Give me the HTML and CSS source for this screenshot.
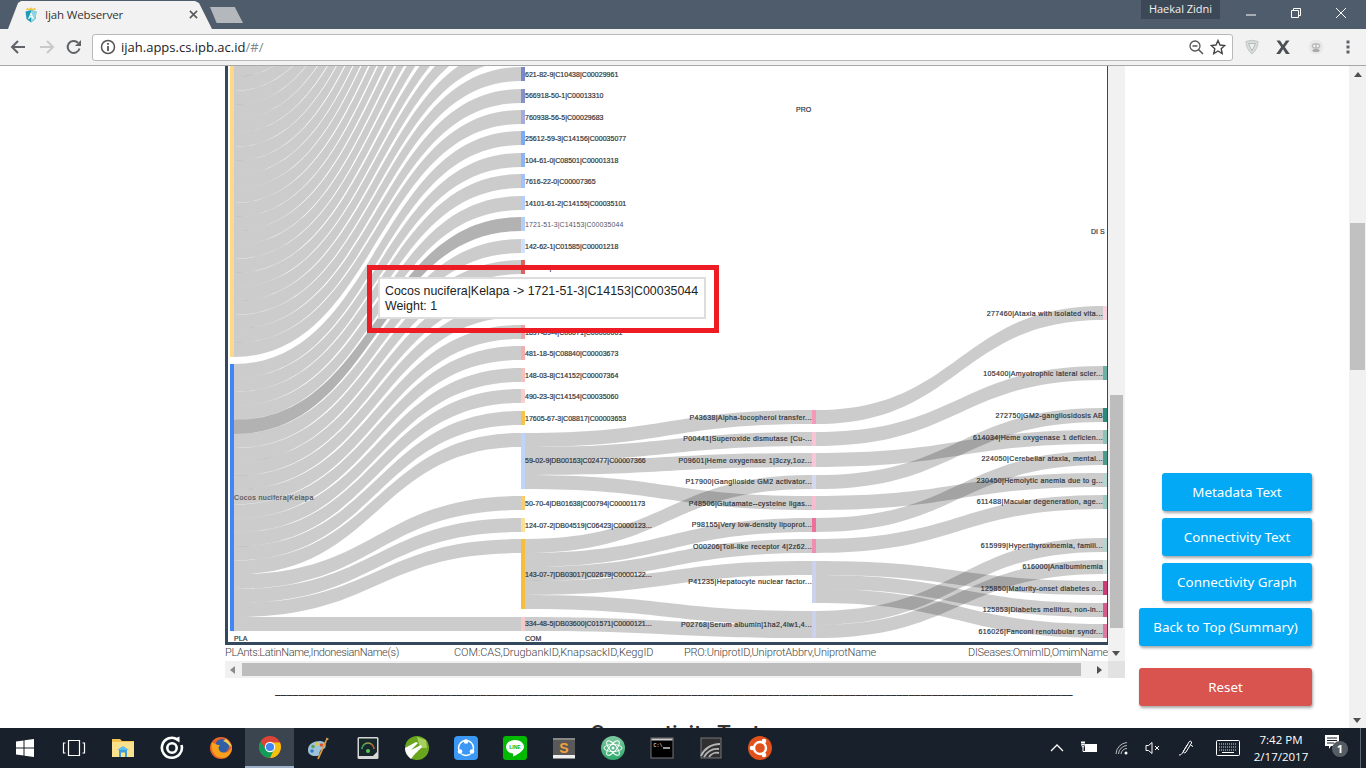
FILE: index.html
```html
<!DOCTYPE html>
<html lang="en">
<head>
<meta charset="utf-8">
<title>Ijah Webserver</title>
<link rel="stylesheet" href="styles.css">
</head>
<body>
<header class="tabstrip">
  <div class="tab">
    <svg class="favicon" viewBox="0 0 12 16"><path fill="#f5c542" d="M1 3 2 .5 4 2 6 .2 8 2 10 .5 11 3z"/><path fill="#1e9cb4" d="M6 3 11.5 4.5 10.5 12 6 15.5 1.500 12 .5 4.500z"/><path fill="#8fd3e0" d="M6 3 11.5 4.500 10.500 12 6 15.500z"/><path fill="#fff" d="M6 5 9 12H7.700L7.100 10.400H4.900L4.300 12H3zM5.300 9.300H6.700L6 7.500z"/></svg>
    <span class="tab-title">Ijah Webserver</span>
    <svg class="tab-close" viewBox="0 0 10 10"><path d="M1 1 9 9M9 1 1 9" stroke="#5a5a5a" stroke-width="1.800" fill="none"/></svg>
  </div>
  <div class="newtab"></div>
  <div class="profile">Haekal Zidni</div>
  <div class="winbtn"><svg viewBox="0 0 12 12"><path d="M1 8H11" stroke="#fff" fill="none"/></svg></div>
  <div class="winbtn"><svg viewBox="0 0 12 12"><path d="M1.500 3.500H8.500V10.500H1.500zM3.500 3.500V1.500H10.500V8.500H8.500" stroke="#fff" fill="none"/></svg></div>
  <div class="winbtn"><svg viewBox="0 0 12 12"><path d="M1 1 11 11M11 1 1 11" stroke="#fff" fill="none"/></svg></div>
</header>

<nav class="toolbar">
  <svg class="tool" viewBox="0 0 16 16"><path d="M15 8H2.500M8 2 2 8l6 6" stroke="#5f6368" stroke-width="2" fill="none"/></svg>
  <svg class="tool" viewBox="0 0 16 16"><path d="M1 8H13.500M8 2l6 6-6 6" stroke="#c9c9c9" stroke-width="2" fill="none"/></svg>
  <svg class="tool" viewBox="0 0 16 16"><path d="M13.500 9.500A6 6 0 1 1 12 3.700" stroke="#5f6368" stroke-width="2" fill="none"/><path fill="#5f6368" d="M15 1V7H9z"/></svg>
  <span></span>
  <div class="omnibox">
    <svg class="omni-icon" viewBox="0 0 16 16"><circle cx="8" cy="8" r="6.500" stroke="#555" stroke-width="1.500" fill="none"/><path d="M8 7V12M8 4V5.800" stroke="#555" stroke-width="1.800"/></svg>
    <span class="url">ijah.apps.cs.ipb.ac.id<span class="url-path">/#/</span></span>
    <svg class="omni-icon omni-zoom" viewBox="0 0 16 16"><circle cx="7" cy="7" r="5" stroke="#555" stroke-width="1.300" fill="none"/><path d="M4.500 7H9.500M10.500 10.500 15 15" stroke="#555" stroke-width="1.500"/></svg>
    <svg class="omni-icon" viewBox="0 0 16 16"><path d="M8 1.500 10 6 14.800 6.500 11.200 9.700 12.200 14.500 8 12 3.800 14.500 4.800 9.700 1.200 6.500 6 6z" stroke="#444" stroke-width="1.400" fill="none"/></svg>
  </div>
  <svg class="tool" viewBox="0 0 16 16"><path d="M2 2.500Q8 0 14 2.500 14 10 8 15 2 10 2 2.500z" fill="#d8dcda" stroke="#c0c4c2"/><path d="M4.500 4.500H11.500L8 12z" fill="#eef0ef" stroke="#b5bab7"/></svg>
  <svg class="tool" viewBox="0 0 16 16"><path d="M1.500 1.500H5L8 6 11 1.500H14.500L9.800 8 14.800 15H11L8 10.300 5 15H1.200L6.200 8z" fill="#4a4f54"/></svg>
  <svg class="tool" viewBox="0 0 16 16"><circle cx="8" cy="8" r="7.500" fill="#e9e9e9"/><ellipse cx="8" cy="7" rx="4.500" ry="3" fill="#bfbfbf"/><path d="M4 11C6 9.500 10 9.500 12 11L10.500 13H5.500z" fill="#aaa"/><circle cx="6.300" cy="7" r="1" fill="#fff"/><circle cx="9.700" cy="7" r="1" fill="#fff"/></svg>
  <svg class="tool tool-dots" viewBox="0 0 4 16"><path fill="#5f6368" d="M.5 1.500h3v3h-3zM.5 6.500h3v3h-3zM.5 11.500h3v3h-3z"/></svg>
</nav>

<div class="viewport">
  <main class="page">
    <section class="chartcol">
      <div class="scroller">
        <div class="scroll-main">
          <div class="plot">
            <svg class="sankey" viewBox="228 66 879 576">
              <g class="links">
                <path d="M234 63C377.500 63 377.500 -318 521 -318V-304C377.500 -304 377.500 77 234 77Z"/>
                <path d="M234 77C377.500 77 377.500 -297 521 -297V-283C377.500 -283 377.500 91 234 91Z"/>
                <path d="M234 91C377.500 91 377.500 -275 521 -275V-261C377.500 -261 377.500 105 234 105Z"/>
                <path d="M234 105C377.500 105 377.500 -254 521 -254V-240C377.500 -240 377.500 119 234 119Z"/>
                <path d="M234 119C377.500 119 377.500 -233 521 -233V-219C377.500 -219 377.500 133 234 133Z"/>
                <path d="M234 133C377.500 133 377.500 -211 521 -211V-197C377.500 -197 377.500 147 234 147Z"/>
                <path d="M234 147C377.500 147 377.500 -190 521 -190V-176C377.500 -176 377.500 161 234 161Z"/>
                <path d="M234 161C377.500 161 377.500 -168 521 -168V-154C377.500 -154 377.500 175 234 175Z"/>
                <path d="M234 175C377.500 175 377.500 -147 521 -147V-133C377.500 -133 377.500 189 234 189Z"/>
                <path d="M234 189C377.500 189 377.500 -126 521 -126V-112C377.500 -112 377.500 203 234 203Z"/>
                <path d="M234 203C377.500 203 377.500 -104 521 -104V-90C377.500 -90 377.500 217 234 217Z"/>
                <path d="M234 217C377.500 217 377.500 -83 521 -83V-69C377.500 -69 377.500 231 234 231Z"/>
                <path d="M234 231C377.500 231 377.500 -61 521 -61V-47C377.500 -47 377.500 245 234 245Z"/>
                <path d="M234 245C377.500 245 377.500 -40 521 -40V-26C377.500 -26 377.500 259 234 259Z"/>
                <path d="M234 259C377.500 259 377.500 -19 521 -19V-5C377.500 -5 377.500 273 234 273Z"/>
                <path d="M234 273C377.500 273 377.500 3 521 3V17C377.500 17 377.500 287 234 287Z"/>
                <path d="M234 287C377.500 287 377.500 24 521 24V38C377.500 38 377.500 301 234 301Z"/>
                <path d="M234 301C377.500 301 377.500 46 521 46V60C377.500 60 377.500 315 234 315Z"/>
                <path d="M234 315C377.500 315 377.500 67 521 67V81C377.500 81 377.500 329 234 329Z"/>
                <path d="M234 329C377.500 329 377.500 89 521 89V103C377.500 103 377.500 343 234 343Z"/>
                <path d="M234 343C377.500 343 377.500 110 521 110V124C377.500 124 377.500 357 234 357Z"/>

                <path d="M234 364C377.500 364 377.500 131 521 131V145C377.500 145 377.500 378 234 378Z"/>
                <path d="M234 378C377.500 378 377.500 153 521 153V167C377.500 167 377.500 392 234 392Z"/>
                <path d="M234 392C377.500 392 377.500 174 521 174V188C377.500 188 377.500 406 234 406Z"/>
                <path d="M234 406C377.500 406 377.500 196 521 196V210C377.500 210 377.500 420 234 420Z"/>
                <path class="hl" d="M234 420C377.500 420 377.500 217 521 217V231C377.500 231 377.500 434 234 434Z"/>
                <path d="M234 434C377.500 434 377.500 239 521 239V253C377.500 253 377.500 448 234 448Z"/>
                <path d="M234 448C377.500 448 377.500 260 521 260V274C377.500 274 377.500 462 234 462Z"/>
                <path d="M234 462C377.500 462 377.500 282 521 282V296C377.500 296 377.500 476 234 476Z"/>
                <path d="M234 476C377.500 476 377.500 303 521 303V317C377.500 317 377.500 490 234 490Z"/>
                <path d="M234 490C377.500 490 377.500 325 521 325V339C377.500 339 377.500 504.500 234 504.500Z"/>
                <path d="M234 504.500C377.500 504.500 377.500 346 521 346V360C377.500 360 377.500 518.500 234 518.500Z"/>
                <path d="M234 518.500C377.500 518.500 377.500 368 521 368V382C377.500 382 377.500 532.500 234 532.500Z"/>
                <path d="M234 532.500C377.500 532.500 377.500 389 521 389V403C377.500 403 377.500 546.500 234 546.500Z"/>
                <path d="M234 546.500C377.500 546.500 377.500 411 521 411V425C377.500 425 377.500 560.500 234 560.500Z"/>
                <path d="M234 560.500C377.500 560.500 377.500 433 521 433V447C377.500 447 377.500 574.500 234 574.500Z"/>
                <path d="M234 574.500C377.500 574.500 377.500 496 521 496V510C377.500 510 377.500 589 234 589Z"/>
                <path d="M234 589C377.500 589 377.500 518 521 518V532C377.500 532 377.500 603 234 603Z"/>
                <path d="M234 603C377.500 603 377.500 539 521 539V553C377.500 553 377.500 617 234 617Z"/>
                <path d="M234 617C377.500 617 377.500 617 521 617V631C377.500 631 377.500 631 234 631Z"/>

                <path d="M525 433C668.500 433 668.500 410 812 410V424C668.500 424 668.500 447 525 447Z"/>
                <path d="M525 447C668.500 447 668.500 432 812 432V446C668.500 446 668.500 461 525 461Z"/>
                <path d="M525 461C668.500 461 668.500 453 812 453V467C668.500 467 668.500 475 525 475Z"/>
                <path d="M525 475C668.500 475 668.500 496 812 496V510C668.500 510 668.500 489 525 489Z"/>
                <path d="M525 539C668.500 539 668.500 475 812 475V489C668.500 489 668.500 553 525 553Z"/>
                <path d="M525 553C668.500 553 668.500 518 812 518V532C668.500 532 668.500 567 525 567Z"/>
                <path d="M525 567C668.500 567 668.500 539 812 539V553C668.500 553 668.500 581 525 581Z"/>
                <path d="M525 581C668.500 581 668.500 561 812 561V575C668.500 575 668.500 595 525 595Z"/>
                <path d="M525 595C668.500 595 668.500 611 812 611V625C668.500 625 668.500 609 525 609Z"/>
                <path d="M525 617C668.500 617 668.500 625 812 625V638C668.500 638 668.500 631 525 631Z"/>

                <path d="M816 410C959.500 410 959.500 306 1103 306V320C959.500 320 959.500 424 816 424Z"/>
                <path d="M816 432C959.500 432 959.500 366 1103 366V380C959.500 380 959.500 446 816 446Z"/>
                <path d="M816 453C959.500 453 959.500 430 1103 430V444C959.500 444 959.500 467 816 467Z"/>
                <path d="M816 475C959.500 475 959.500 408 1103 408V422C959.500 422 959.500 489 816 489Z"/>
                <path d="M816 496C959.500 496 959.500 473 1103 473V487C959.500 487 959.500 510 816 510Z"/>
                <path d="M816 518C959.500 518 959.500 451 1103 451V465C959.500 465 959.500 532 816 532Z"/>
                <path d="M816 539C959.500 539 959.500 495 1103 495V509C959.500 509 959.500 553 816 553Z"/>
                <path d="M816 561C959.500 561 959.500 581 1103 581V595C959.500 595 959.500 575 816 575Z"/>
                <path d="M816 575C959.500 575 959.500 603 1103 603V617C959.500 617 959.500 589 816 589Z"/>
                <path d="M816 589C959.500 589 959.500 624 1103 624V638C959.500 638 959.500 603 816 603Z"/>
                <path d="M816 611C959.500 611 959.500 538 1103 538V552C959.500 552 959.500 625 816 625Z"/>
                <path d="M816 625C959.500 625 959.500 560 1103 560V574C959.500 574 959.500 638 816 638Z"/>
              </g>

              <rect x="230" y="60" width="4" height="297" fill="#fdd98a"/>
              <rect x="230" y="364" width="4" height="267" fill="#4285f4"/>

              <rect x="521" y="67" width="4" height="14" fill="#7986cb"/>
              <rect x="521" y="89" width="4" height="14" fill="#8590cf"/>
              <rect x="521" y="110" width="4" height="14" fill="#a3acdc"/>
              <rect x="521" y="131" width="4" height="14" fill="#7baaf7"/>
              <rect x="521" y="153" width="4" height="14" fill="#8ab4f8"/>
              <rect x="521" y="174" width="4" height="14" fill="#a1c2fa"/>
              <rect x="521" y="196" width="4" height="14" fill="#b3cefb"/>
              <rect x="521" y="217" width="4" height="14" fill="#b3cefb"/>
              <rect x="521" y="239" width="4" height="14" fill="#d0e1fd"/>
              <rect x="521" y="260" width="4" height="14" fill="#dc6460"/>
              <rect x="521" y="282" width="4" height="14" fill="#e57373"/>
              <rect x="521" y="303" width="4" height="14" fill="#e98a86"/>
              <rect x="521" y="325" width="4" height="14" fill="#efa0a0"/>
              <rect x="521" y="346" width="4" height="14" fill="#f2aeae"/>
              <rect x="521" y="368" width="4" height="14" fill="#f5c0bc"/>
              <rect x="521" y="389" width="4" height="14" fill="#f8cfcd"/>
              <rect x="521" y="411" width="4" height="14" fill="#f6c344"/>
              <rect x="521" y="433" width="4" height="56" fill="#bed5fb"/>
              <rect x="521" y="496" width="4" height="14" fill="#f9cd6e"/>
              <rect x="521" y="518" width="4" height="14" fill="#fbdf93"/>
              <rect x="521" y="539" width="4" height="70" fill="#f6be3a"/>
              <rect x="521" y="617" width="4" height="14" fill="#f7caca"/>

              <rect x="812" y="410" width="4" height="14" fill="#f49ab8"/>
              <rect x="812" y="432" width="4" height="14" fill="#f8c4d6"/>
              <rect x="812" y="453" width="4" height="14" fill="#f8c8da"/>
              <rect x="812" y="475" width="4" height="14" fill="#d5d9ef"/>
              <rect x="812" y="496" width="4" height="14" fill="#f8bcd2"/>
              <rect x="812" y="518" width="4" height="14" fill="#ee6f9b"/>
              <rect x="812" y="539" width="4" height="14" fill="#f08db0"/>
              <rect x="812" y="561" width="4" height="42" fill="#ccd2ec"/>
              <rect x="812" y="611" width="4" height="27" fill="#ccd2ec"/>

              <rect x="1103" y="306" width="4" height="14" fill="#f8d4e0"/>
              <rect x="1103" y="366" width="4" height="14" fill="#6fb0a4"/>
              <rect x="1103" y="408" width="4" height="14" fill="#2e8b7b"/>
              <rect x="1103" y="430" width="4" height="14" fill="#8dc2b8"/>
              <rect x="1103" y="451" width="4" height="14" fill="#4d9c8c"/>
              <rect x="1103" y="473" width="4" height="14" fill="#b4d6cf"/>
              <rect x="1103" y="495" width="4" height="14" fill="#9ccbc2"/>
              <rect x="1103" y="538" width="4" height="14" fill="#b3d5ce"/>
              <rect x="1103" y="560" width="4" height="14" fill="#c7e0dc"/>
              <rect x="1103" y="581" width="4" height="14" fill="#cf3a78"/>
              <rect x="1103" y="603" width="4" height="14" fill="#d65c8e"/>
              <rect x="1103" y="624" width="4" height="14" fill="#dd79a3"/>

              <g class="labels">
                <text class="plant" x="234" y="499.500">Cocos nucifera|Kelapa</text>
                <text x="234" y="640.500">PLA</text>
                <text x="525" y="640.500">COM</text>
                <text x="796" y="111.500">PRO</text>
                <text x="1091" y="233.500">DI S</text>

                <text x="525" y="76.500">621-82-9|C10438|C00029961</text>
                <text x="525" y="97.500">566918-50-1|C00013310</text>
                <text x="525" y="119.500">760938-56-5|C00029683</text>
                <text x="525" y="140.500">25612-59-3|C14156|C00035077</text>
                <text x="525" y="162.500">104-61-0|C08501|C00001318</text>
                <text x="525" y="183.500">7616-22-0|C00007365</text>
                <text x="525" y="205.500">14101-61-2|C14155|C00035101</text>
                <text class="lit" x="525" y="226.500">1721-51-3|C14153|C00035044</text>
                <text x="525" y="248.500">142-62-1|C01585|C00001218</text>
                <text x="525" y="269.500">99-49-0|C00000057</text>
                <text x="525" y="334.500">1897-89-4|C00071|C00000001</text>
                <text x="525" y="355.500">481-18-5|C08840|C00003673</text>
                <text x="525" y="377.500">148-03-8|C14152|C00007364</text>
                <text x="525" y="398.500">490-23-3|C14154|C00035060</text>
                <text x="525" y="420.500">17605-67-3|C08817|C00003653</text>
                <text x="525" y="462.500">59-02-9|DB00163|C02477|C00007366</text>
                <text x="525" y="505.500">50-70-4|DB01638|C00794|C00001173</text>
                <text x="525" y="527.500">124-07-2|DB04519|C06423|C0000123...</text>
                <text x="525" y="576.500">143-07-7|DB03017|C02679|C0000122...</text>
                <text x="525" y="625.500">334-48-5|DB03600|C01571|C0000121...</text>

                <g class="end">
                  <text x="812" y="419.500">P43638|Alpha-tocopherol transfer...</text>
                  <text x="812" y="440.500">P00441|Superoxide dismutase [Cu-...</text>
                  <text x="812" y="462.500">P09601|Heme oxygenase 1|3czy,1oz...</text>
                  <text x="812" y="483.500">P17900|Ganglioside GM2 activator...</text>
                  <text x="812" y="505.500">P48506|Glutamate--cysteine ligas...</text>
                  <text x="812" y="526.500">P98155|Very low-density lipoprot...</text>
                  <text x="812" y="548.500">O00206|Toll-like receptor 4|2z62...</text>
                  <text x="812" y="583.500">P41235|Hepatocyte nuclear factor...</text>
                  <text x="812" y="626.500">P02768|Serum albumin|1ha2,4lw1,4...</text>

                  <text x="1103" y="315.500">277460|Ataxia with isolated vita...</text>
                  <text x="1103" y="375.500">105400|Amyotrophic lateral scler...</text>
                  <text x="1103" y="417.500">272750|GM2-gangliosidosis AB</text>
                  <text x="1103" y="439.500">614034|Heme oxygenase 1 deficien...</text>
                  <text x="1103" y="460.500">224050|Cerebellar ataxia, mental...</text>
                  <text x="1103" y="482.500">230450|Hemolytic anemia due to g...</text>
                  <text x="1103" y="503.500">611488|Macular degeneration, age...</text>
                  <text x="1103" y="547.500">615999|Hyperthyroxinemia, famili...</text>
                  <text x="1103" y="568.500">616000|Analbuminemia</text>
                  <text x="1103" y="590.500">125850|Maturity-onset diabetes o...</text>
                  <text x="1103" y="611.500">125853|Diabetes mellitus, non-in...</text>
                  <text x="1103" y="633.500">616026|Fanconi renotubular syndr...</text>
                </g>
              </g>
            </svg>
            <div class="tooltip-mark">
              <div class="tooltip">Cocos nucifera|Kelapa -&gt; 1721-51-3|C14153|C00035044<br>Weight: 1</div>
            </div>
          </div>
          <div class="axes">
            <span class="axis-pla">PLAnts:LatinName,IndonesianName(s)</span>
            <span class="axis-com">COM:CAS,DrugbankID,KnapsackID,KeggID</span>
            <span class="axis-pro">PRO:UniprotID,UniprotAbbrv,UniprotName</span>
            <span class="axis-dis">DISeases:OmimID,OmimName</span>
          </div>
        </div>
        <div class="vbar">
          <div class="vthumb"></div>
          <div class="arrow arrow-down"></div>
        </div>
        <div class="hbar">
          <div class="arrow arrow-left"></div>
          <div class="hthumb"></div>
          <div class="arrow arrow-right"></div>
        </div>
        <div class="corner"></div>
      </div>
      <div class="rule">________________________________________________________________________________________________________________________________________</div>
      <h2 class="section-title">Connectivity Text</h2>
    </section>
    <aside class="actions">
      <button class="btn btn-short">Metadata Text</button>
      <button class="btn btn-short">Connectivity Text</button>
      <button class="btn btn-short">Connectivity Graph</button>
      <button class="btn">Back to Top (Summary)</button>
      <button class="btn btn-reset">Reset</button>
    </aside>
  </main>
  <div class="pagebar">
    <div class="arrow arrow-up"></div>
    <div class="pagethumb"></div>
    <div class="arrow arrow-down arrow-end"></div>
  </div>
</div>

<footer class="taskbar">
  <div class="apps">
    <div class="app"><svg viewBox="0 0 24 24"><path fill="#fff" d="M3 5.500 10.500 4.400V11.500H3zM11.500 4.300 21 3V11.500H11.500zM3 12.500H10.500V19.600L3 18.500zM11.500 12.500H21V21L11.500 19.700z"/></svg></div>
    <div class="app"><svg viewBox="0 0 24 24"><path fill="none" stroke="#fff" stroke-width="1.200" d="M6.500 4.500H17.500V19.500H6.500zM3.500 7H1.500V17H3.500M20.500 7H22.500V17H20.500"/></svg></div>
    <div class="app"><svg viewBox="0 0 24 24"><path fill="#f3c14e" d="M1 3H9L11 5H23V21H1z"/><path fill="#fbe08e" d="M1 6H23V21H1z"/><path fill="#3c9fdc" d="M8 21V14H16V21H14V16.500H10V21z"/><path fill="#5cbcec" d="M6 14 12 10 18 14z"/></svg></div>
    <div class="app"><svg viewBox="0 0 24 24"><path fill="none" stroke="#fff" stroke-width="2.600" d="M17.500 3.500A10 10 0 1 0 21.500 9"/><circle cx="12" cy="12" r="4.700" fill="none" stroke="#fff" stroke-width="2.600"/><path fill="#fff" d="M14 3 19.500 .5V6.500z"/></svg></div>
    <div class="app"><svg viewBox="0 0 24 24"><circle cx="12" cy="12" r="11" fill="#e8622a"/><circle cx="13" cy="10" r="7" fill="#2f5fa8"/><path fill="#f9a11b" d="M3 6C1 13 5 22 13 22 19 22 23 17 23 11 21 16 16 18 12 16 9 14 9 11 11 9 9 9 7 9 6.500 7.500 5.500 7.500 4 7 3 6z"/><path fill="#f6cf4a" d="M17 3C20 5 22 8 23 11 20 10 18 6 14 5z"/></svg></div>
    <div class="app app-active"><svg viewBox="0 0 24 24"><circle cx="12" cy="12" r="11" fill="#db4437"/><path fill="#0f9d58" d="M2.500 6.500A11 11 0 0 0 12 23L17 14.500 7.500 14z"/><path fill="#f4c20d" d="M12 7.500H22A11 11 0 0 1 12 23L16.500 13.500z"/><circle cx="12" cy="12" r="5.200" fill="#fff"/><circle cx="12" cy="12" r="4.100" fill="#4285f4"/></svg></div>
    <div class="app"><svg viewBox="0 0 24 24"><path fill="#9cc3dc" d="M1 14C1 8 7 5 13 5 18 5 20 9 18 12 16 14 14 13 13 15 12 18 13 20 9 20 4 20 1 18 1 14z"/><circle cx="6" cy="10.500" r="1.800" fill="#5fa04e"/><circle cx="10" cy="8" r="1.800" fill="#e8c13a"/><circle cx="14.500" cy="9" r="1.800" fill="#d9542b"/><circle cx="5" cy="15" r="1.800" fill="#3b78c4"/><path stroke="#e59a3c" stroke-width="1.800" d="M11 23 19 5"/><path fill="#d9a35a" d="M18 6 19.500 1.500 22 3z"/></svg></div>
    <div class="app"><svg viewBox="0 0 24 24"><rect x="1.500" y="1" width="21" height="22" rx="1.500" fill="#d6d6d6"/><rect x="3" y="2.500" width="18" height="17.500" fill="#17282a"/><path d="M6 13A6 6 0 0 1 18 13" fill="none" stroke="#9a9a50" stroke-width="1.300"/><path d="M6 13A6 6 0 0 1 9 8" fill="none" stroke="#3d9a5a" stroke-width="1.300"/><path d="M15 8A6 6 0 0 1 18 13" fill="none" stroke="#c7502e" stroke-width="1.300"/><circle cx="12" cy="15" r="2" fill="#5ec45a"/><path fill="#ddd" d="M17 20 21 16V20z"/></svg></div>
    <div class="app"><svg viewBox="0 0 24 24"><circle cx="12" cy="12" r="12" fill="#6aa51e"/><path fill="#a7cf5d" d="M12 1 21 4 22 12 15 12z"/><path fill="#fff" d="M0 12 11 6 13 7 6 14 16 9 17 11 9 19 6 23C2 20 0 16 0 12z"/></svg></div>
    <div class="app"><svg viewBox="0 0 24 24"><rect width="24" height="24" rx="4" fill="#3b98f5"/><circle cx="12" cy="12" r="7.500" fill="none" stroke="#fff" stroke-width="1.500"/><path d="M12 7.500 7 16H17z" fill="none" stroke="#3b98f5" stroke-width="3"/><circle cx="12" cy="5.500" r="2.300" fill="#fff"/><circle cx="6" cy="15.500" r="2.300" fill="#fff"/><circle cx="18" cy="15.500" r="2.300" fill="#fff"/></svg></div>
    <div class="app"><svg viewBox="0 0 24 24"><rect width="24" height="24" rx="3" fill="#00b900"/><path fill="#fff" d="M12 4C6.500 4 3 7.300 3 11 3 14.500 6 17 10 17.500L10 20.500C13 19.500 21 15 21 11 21 7.300 17.500 4 12 4z"/><text class="line-text" x="12" y="13">LINE</text></svg></div>
    <div class="app"><svg viewBox="0 0 24 24"><rect x="1" y="2" width="22" height="20" rx="1" fill="#595959"/><rect x="1" y="19" width="22" height="3.500" fill="#eee"/><rect x="1" y="2" width="22" height="2" fill="#888"/><text class="sublime" x="12" y="16.500">S</text></svg></div>
    <div class="app"><svg viewBox="0 0 24 24"><defs><linearGradient id="atomfill" x1="0" y1="0" x2="0" y2="1"><stop offset="0" stop-color="#7ec9a0"/><stop offset="1" stop-color="#2fa86d"/></linearGradient></defs><circle cx="12" cy="12" r="12" fill="url(#atomfill)"/><g fill="none" stroke="#fff" stroke-width="1"><ellipse cx="12" cy="12" rx="3.500" ry="9" transform="rotate(40 12 12)"/><ellipse cx="12" cy="12" rx="3.500" ry="9" transform="rotate(-40 12 12)"/><ellipse cx="12" cy="12" rx="9" ry="3.500"/></g><circle cx="12" cy="12" r="1.500" fill="#fff"/></svg></div>
    <div class="app"><svg viewBox="0 0 24 24"><rect x="1" y="2" width="22" height="20" fill="#000" stroke="#777"/><rect x="1.500" y="2.500" width="21" height="2" fill="#ccc"/><text class="cmd" x="3.500" y="10.500">C:\</text><path stroke="#fff" stroke-width="1.200" d="M13 12H20"/></svg></div>
    <div class="app"><svg viewBox="0 0 24 24"><rect x="2" y="2" width="20" height="20" fill="#303030" stroke="#777"/><path fill="none" stroke="#b5b5b5" stroke-width="1.900" d="M2 20C5 13 12 8 21 8M5 21C8 16 13 12 20 13M10 21C12 18 16 16 20 17"/></svg></div>
    <div class="app"><svg viewBox="0 0 24 24"><circle cx="12" cy="12" r="12" fill="#e2501c"/><circle cx="12" cy="12" r="6" fill="none" stroke="#fff" stroke-width="2.400"/><circle cx="4" cy="12" r="2.300" fill="#fff"/><circle cx="16" cy="5" r="2.300" fill="#fff"/><circle cx="16" cy="19" r="2.300" fill="#fff"/></svg></div>
  </div>
  <div class="tray">
    <svg class="tray-icon" viewBox="0 0 16 16"><path d="M2 11 8 5 14 11" fill="none" stroke="#fff" stroke-width="1.300"/></svg>
    <svg class="tray-icon tray-wide" viewBox="0 0 18 16"><rect x="5.500" y="4.500" width="11" height="7" fill="#fff" stroke="#fff"/><path d="M1 2.500H5M2 1V4M4 1V4M1.500 4.500H4.500L3.500 7H2.500zM3 7V11.500H5" stroke="#fff" fill="none"/></svg>
    <svg class="tray-icon" viewBox="0 0 16 16"><path d="M2 14A12 12 0 0 1 13 2.500M4.500 14A9 9 0 0 1 13 5.500M7 14A6 6 0 0 1 13 8.500" fill="none" stroke="#bbb"/><circle cx="12" cy="13" r="1.500" fill="#fff"/></svg>
    <svg class="tray-icon" viewBox="0 0 16 16"><path d="M1 5.500H3.500L7 2.500V13.500L3.500 10.500H1z" fill="none" stroke="#fff"/><path d="M10 6 14 10M14 6 10 10" stroke="#fff"/></svg>
    <svg class="tray-icon" viewBox="0 0 16 16"><path d="M1 15C3 15 4 14 5 12L11 2C12 .5 14 1 13.500 3L8 12C7 13.500 5 13 5.500 11L10 4M12.500 5 15 6.500" fill="none" stroke="#fff"/></svg>
    <svg class="tray-key" viewBox="0 0 24 16"><rect x=".5" y=".5" width="23" height="15" rx="1" fill="none" stroke="#fff"/><path d="M3 4H21M3 7H21M3 10H21" stroke="#ddd" stroke-dasharray="1 1"/><path d="M6 12.500H18" stroke="#fff"/></svg>
    <div class="clock"><div>7:42 PM</div><div>2/17/2017</div></div>
    <div class="notify">
      <svg class="tray-icon" viewBox="0 0 16 16"><path fill="#fff" d="M1 1H15V12H7L5 15V12H1z"/><path stroke="#18202b" d="M3 4H13M3 6.500H13M3 9H10"/></svg>
      <span class="badge">1</span>
    </div>
    <div class="show-desktop"></div>
  </div>
</footer>
</body>
</html>
```

FILE: styles.css
```css
* { box-sizing: border-box; }
html, body { margin: 0; height: 100%; }
body {
  width: 1366px;
  height: 768px;
  overflow: hidden;
  display: flex;
  flex-direction: column;
  font-family: "Liberation Sans", Arial, sans-serif;
  background: #fff;
}

/* browser chrome */
.tabstrip {
  height: 29px;
  flex: none;
  display: flex;
  align-items: flex-start;
  background: #4f5c6b;
}
.tab {
  width: 204px;
  height: 29px;
  margin: 0 0 0 8px;
  padding: 0 14px 0 17px;
  display: flex;
  align-items: center;
  background: #f2f2f2;
  clip-path: polygon(0 100%, 10px 3px, 13px 1px, 187px 1px, 191px 3px, 100% 100%);
}
.favicon { width: 12px; height: 16px; flex: none; }
.tab-title {
  margin-left: 8px;
  flex: 1;
  font: 11.500px "Open Sans", sans-serif;
  letter-spacing: -.15px;
  color: #333;
}
.tab-close { width: 9px; height: 9px; flex: none; }
.newtab {
  width: 33px;
  height: 16px;
  margin: 7px 0 0 -2px;
  background: #b4b8bc;
  clip-path: polygon(0 0, 75% 0, 100% 100%, 20% 100%);
}
.profile {
  margin-left: auto;
  margin-right: 8px;
  width: 79px;
  height: 19px;
  background: #3d4856;
  color: #f0f0f0;
  font: 11px/18px "Open Sans", sans-serif;
  text-align: center;
}
.winbtn {
  width: 45px;
  height: 25px;
  display: flex;
  align-items: center;
  justify-content: center;
}
.winbtn:last-child { margin-right: 3px; }
.winbtn svg { width: 12px; height: 12px; }

.toolbar {
  height: 37px;
  flex: none;
  display: grid;
  grid-template-columns: 36px 22px 32px 2px 1141px 38px 24px 42px 22px 7px;
  align-items: center;
  justify-items: center;
  background: #f2f2f2;
  border-bottom: 1px solid #a8a8a8;
}
.tool { width: 16px; height: 16px; }
.tool-dots { width: 4px; }
.omnibox {
  width: 1141px;
  height: 27px;
  padding: 0 6px 0 7px;
  display: flex;
  align-items: center;
  gap: 5px;
  background: #fff;
  border: 1px solid #b9b9b9;
  border-radius: 3px;
}
.omni-icon { width: 16px; height: 16px; flex: none; }
.omni-zoom { margin-left: auto; margin-right: 1px; }
.url { font: 13px "Open Sans", sans-serif; color: #222; }
.url-path { color: #7d8a94; }

/* page */
.viewport { flex: 1; min-height: 0; display: flex; }
.page {
  flex: 1;
  min-width: 0;
  padding-left: 225px;
  display: flex;
  overflow: hidden;
  background: #fff;
}
.chartcol { width: 900px; flex: none; }
.scroller {
  display: grid;
  grid-template-columns: 883px 17px;
  grid-template-rows: 595px 17px;
}
.scroll-main { min-height: 0; min-width: 0; }
.plot {
  position: relative;
  height: 579px;
  border-left: 3px solid #34495e;
  border-right: 1px solid #34495e;
  border-bottom: 3px solid #34495e;
}
.sankey { display: block; width: 879px; height: 576px; }
.links path { fill: #000; fill-opacity: .2; }
.links path.hl { fill-opacity: .3; }
.labels text {
  font: 400 7px "Liberation Sans", Arial, sans-serif;
  fill: #30353b;
  stroke: #30353b;
  stroke-width: .2px;
  letter-spacing: .04px;
}
.labels .end text { text-anchor: end; letter-spacing: .36px; }
.labels .plant { fill: #555; stroke: #555; letter-spacing: .45px; }
.labels .lit { fill: #556; stroke: none; letter-spacing: .08px; }

.tooltip-mark {
  position: absolute;
  left: 139px;
  top: 199px;
  width: 352px;
  height: 68px;
  padding: 7px 8px 0 6px;
  border: 5px solid #ed1c24;
}
.tooltip {
  height: 42px;
  padding: 5px;
  background: #fff;
  border: 2px solid #ddd;
  font: 12.400px/15px "Liberation Sans", Arial, sans-serif;
  color: #222;
  white-space: nowrap;
}
.axes {
  height: 16px;
  display: grid;
  grid-template-columns: 229px 230px 284px 140px;
  font: 300 11px/15px Roboto, sans-serif;
  color: #444;
  white-space: nowrap;
}
.axis-pla { letter-spacing: -.38px; }
.axis-com { letter-spacing: -.05px; }
.axis-pro { letter-spacing: -.2px; }
.axis-dis { letter-spacing: -.3px; }
.vbar {
  position: relative;
  background: #f1f1f1;
  padding: 329px 2px 0;
}
.vthumb { height: 233px; background: #bdbdbd; }
.vbar .arrow-down { position: absolute; left: 4px; bottom: 5px; }
.hbar {
  display: flex;
  align-items: center;
  background: #f1f1f1;
  padding: 0 4px 0 5px;
}
.hthumb { width: 839px; height: 13px; margin: 0 16px 0 7px; background: #bdbdbd; }
.corner { background: #e2e2e2; }

.arrow { width: 0; height: 0; border: 4px solid transparent; flex: none; }
.arrow-up { border-top: 0; border-bottom: 5px solid #505050; }
.arrow-down { border-bottom: 0; border-top: 5px solid #505050; }
.arrow-left { border-left: 0; border-right: 5px solid #8a8a8a; }
.arrow-right { border-right: 0; border-left: 5px solid #505050; }

.rule {
  margin: 4px 0 0 50px;
  width: 799px;
  height: 17px;
  font: 13px/17px Roboto, sans-serif;
  color: #333;
  white-space: nowrap;
}
.section-title {
  margin: 20px 0 0;
  text-align: center;
  font: 500 22px/30px Roboto, sans-serif;
  color: #333;
}
.actions {
  flex: 1;
  padding: 0 37px 22px 0;
  display: flex;
  flex-direction: column;
  align-items: flex-end;
  justify-content: flex-end;
  gap: 7px;
}
.btn {
  width: 173px;
  height: 38px;
  padding: 0 0 1px;
  border: 0;
  border-radius: 3px;
  background: #03a9f4;
  color: #fff;
  font: 13.400px "Noto Sans", sans-serif;
  box-shadow: 1px 2px 3px rgba(0, 0, 0, .35);
}
.btn-short { width: 150px; }
.btn-reset { margin-top: 15px; background: #d9534f; }

.pagebar {
  width: 17px;
  flex: none;
  position: relative;
  display: flex;
  flex-direction: column;
  align-items: center;
  padding-top: 6px;
  background: #f1f1f1;
}
.pagethumb { width: 15px; height: 147px; margin-top: 146px; background: #c1c1c1; }
.arrow-end { position: absolute; bottom: 5px; left: 4px; }

/* taskbar */
.taskbar {
  height: 40px;
  flex: none;
  display: flex;
  justify-content: space-between;
  background: #18202b;
}
.apps { display: flex; }
.app {
  width: 49px;
  height: 40px;
  display: flex;
  align-items: center;
  justify-content: center;
}
.app svg { width: 24px; height: 24px; }
.app-active { background: #3a4550; border-bottom: 2px solid #9db2c6; }
.line-text { font: 700 5px "Liberation Sans", sans-serif; fill: #00b900; text-anchor: middle; }
.sublime { font: 700 14px "Liberation Sans", sans-serif; fill: #f5a13a; text-anchor: middle; }
.cmd { font: 5px "Liberation Mono", monospace; fill: #fff; }

.tray {
  width: 326px;
  display: grid;
  grid-template-columns: 33px 32px 33px 29px 38px 46px 60px 44px 11px;
  align-items: center;
  justify-items: center;
}
.tray-icon { width: 16px; height: 16px; }
.tray-wide { width: 18px; }
.tray-key { width: 24px; height: 16px; }
.clock {
  font: 11.500px/17px "Open Sans", sans-serif;
  color: #fff;
  text-align: center;
  white-space: nowrap;
}
.notify { position: relative; width: 18px; height: 22px; margin-top: -6px; }
.badge {
  position: absolute;
  left: 8px;
  top: 7px;
  width: 16px;
  height: 16px;
  border-radius: 50%;
  background: #555c64;
  color: #fff;
  font: 700 11px/16px "Open Sans", sans-serif;
  text-align: center;
}
.show-desktop { justify-self: center; width: 1px; height: 40px; background: #5c6570; }
```
